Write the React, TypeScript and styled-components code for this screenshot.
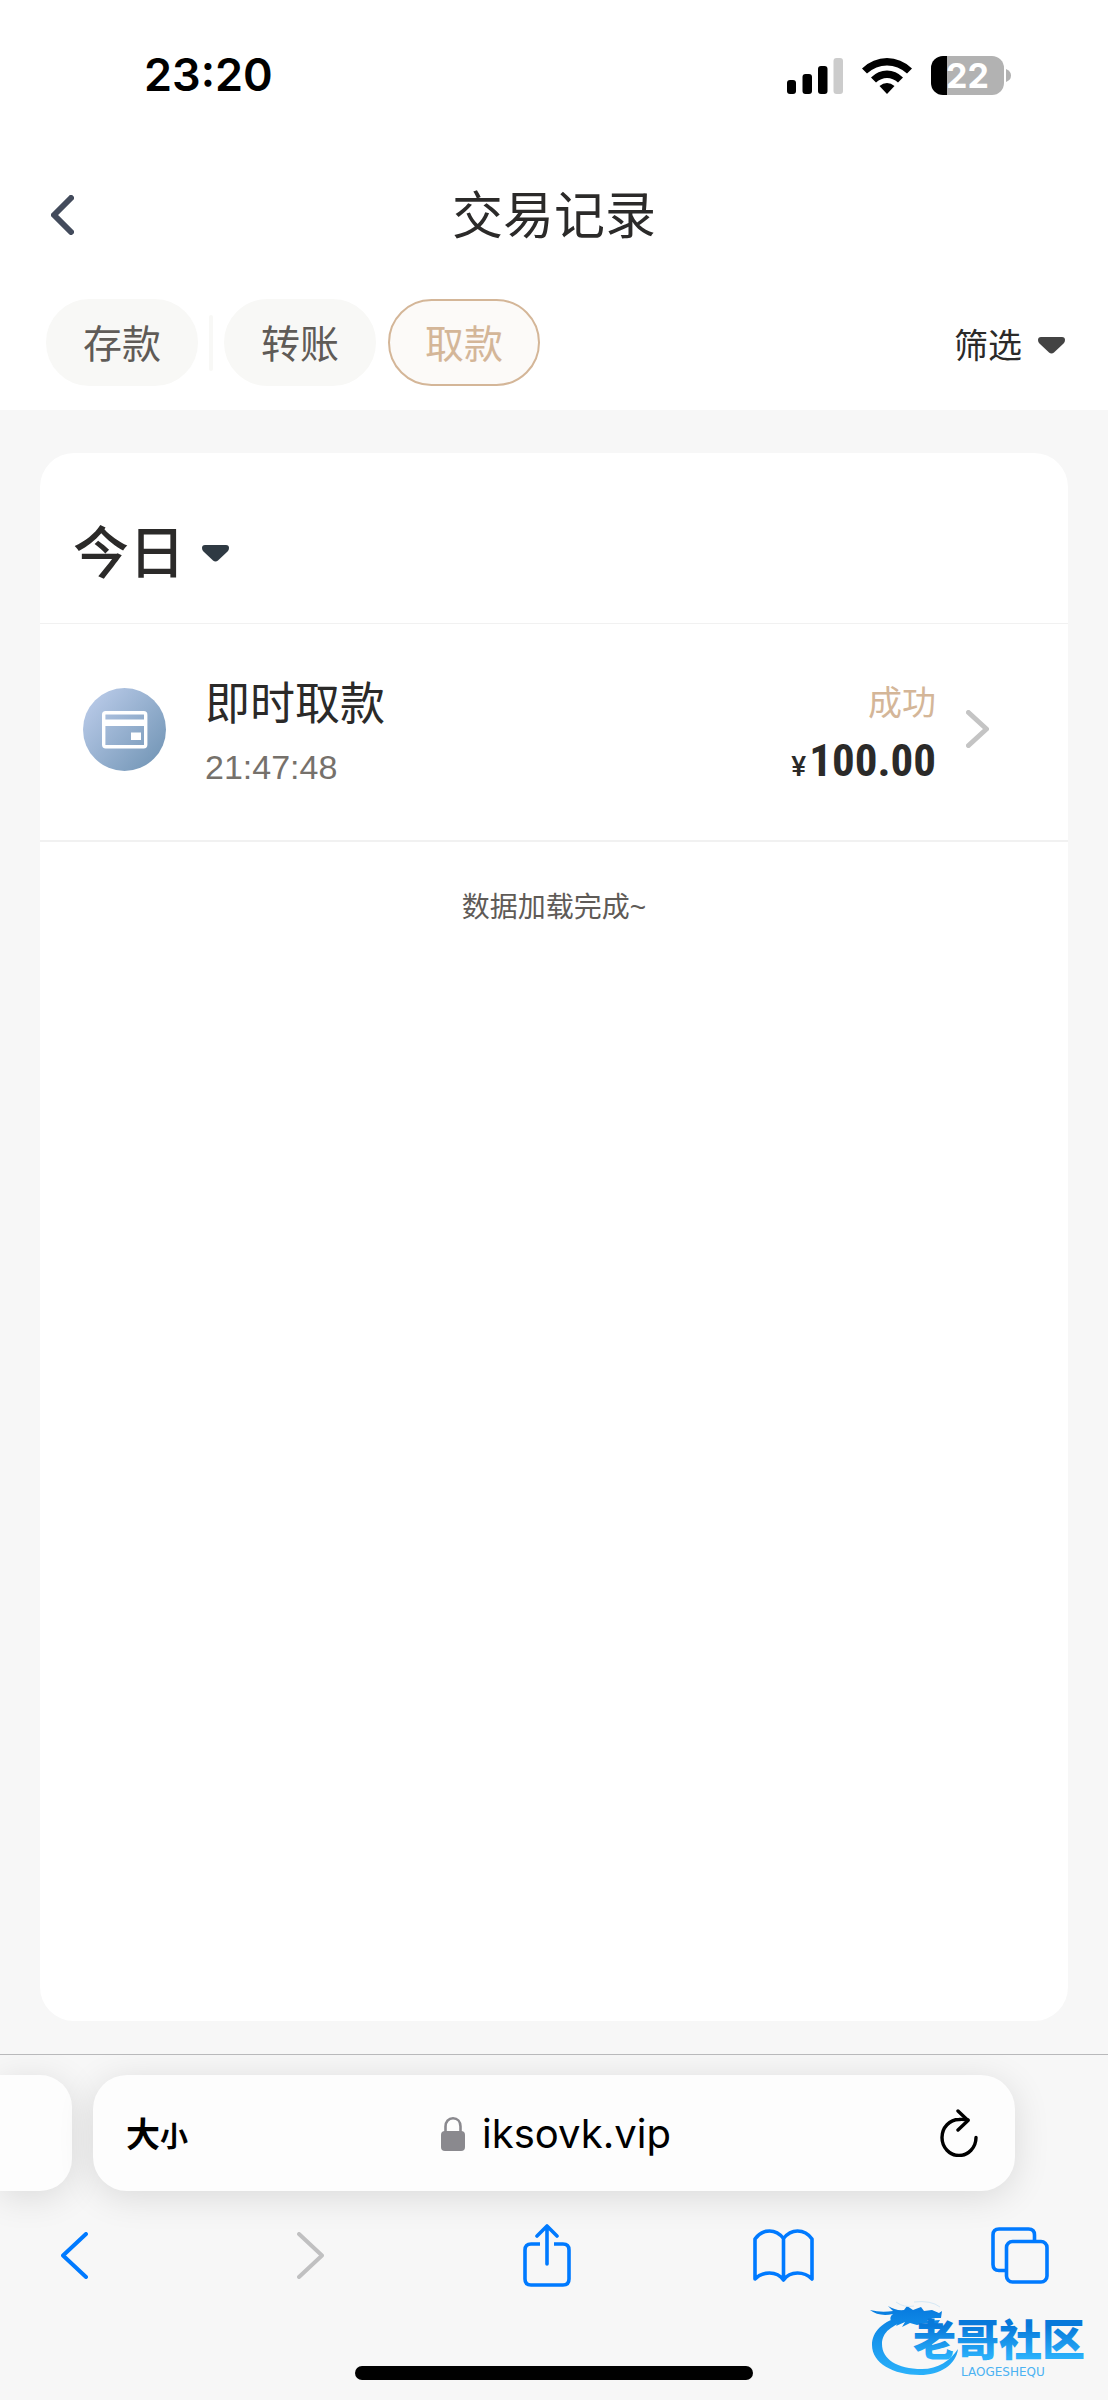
import React from "react";
import styled, { createGlobalStyle } from "styled-components";

const latin = '"Liberation Sans", "Noto Sans CJK SC", sans-serif';
const system = 'Inter, "Noto Sans CJK SC", sans-serif';

const colors = {
  ink: "#2b2a29",
  muted: "#5f5b57",
  faint: "#76716b",
  tan: "#d4b698",
  page: "#f7f7f7",
  line: "#f1f1f1",
  blue: "#007aff",
};

const GlobalStyle = createGlobalStyle`
  * { box-sizing: border-box; }
  body { margin: 0; background: ${colors.page}; font-family: ${latin}; color: ${colors.ink}; }
  button { margin: 0; padding: 0; border: 0; background: none; font: inherit; color: inherit; cursor: pointer; }
  svg { display: block; flex: none; }
  h1, h2, h3, p { margin: 0; font-weight: 400; }
`;

const Screen = styled.div`
  min-height: 100vh;
  display: flex;
  flex-direction: column;
`;

const StatusBar = styled.div`
  height: 150px;
  padding: 0 97px 0 144px;
  display: flex;
  align-items: center;
  justify-content: space-between;
  background: #fff;
`;

const Clock = styled.time`
  font: 600 45px/56px ${system};
  color: #000;
`;

const StatusIcons = styled.div`
  display: flex;
  align-items: center;
  gap: 19px;
`;

const BatteryGroup = styled.div`
  display: flex;
  align-items: center;
  gap: 2px;
`;

const Battery = styled.div`
  width: 73px;
  height: 39px;
  border-radius: 12px;
  background: linear-gradient(90deg, #000 22%, #b2b2b2 22%);
  color: #fff;
  font: 700 34px/39px ${system};
  text-align: center;
`;

const TitleBar = styled.header`
  height: 130px;
  padding: 0 51px;
  display: grid;
  grid-template-columns: 60px 1fr 60px;
  align-items: center;
  background: #fff;
`;

const Title = styled.h1`
  padding-top: 4px;
  font-size: 51px;
  line-height: 60px;
  text-align: center;
`;

const FilterBar = styled.nav`
  padding: 19px 43px 24px 46px;
  display: flex;
  align-items: center;
  background: #fff;
`;

const Pill = styled.button<{ $active?: boolean }>`
  width: 152px;
  height: 87px;
  padding-top: 4px;
  border-radius: 44px;
  border: 2px solid ${(p) => (p.$active ? colors.tan : "#f8f8f6")};
  background: ${(p) => (p.$active ? "#fcfaf8" : "#f8f8f6")};
  color: ${(p) => (p.$active ? colors.tan : colors.muted)};
  font-size: 39px;
  line-height: 48px;
  & + & { margin-left: 12px; }
`;

const Separator = styled.span`
  width: 4px;
  height: 56px;
  margin: 0 11px;
  border-radius: 2px;
  background: #f8f8f6;
`;

const FilterButton = styled.button`
  margin-left: auto;
  padding-top: 6px;
  display: flex;
  align-items: center;
  gap: 16px;
  font-size: 34px;
  line-height: 40px;
`;

const Main = styled.main`
  flex: 1;
  padding: 43px 40px 33px;
  display: flex;
`;

const Card = styled.section`
  flex: 1;
  border-radius: 34px;
  background: #fff;
`;

const DayHeading = styled.h2`
  height: 171px;
  padding: 31px 33px 0;
  display: flex;
  align-items: center;
  border-bottom: 1px solid ${colors.line};
`;

const DayButton = styled.button`
  display: flex;
  align-items: center;
  gap: 17px;
  font-size: 56px;
  font-weight: 500;
  line-height: 68px;
`;

const Record = styled.a`
  height: 218px;
  padding: 0 79px 6px 43px;
  display: flex;
  align-items: center;
  border-bottom: 2px solid ${colors.line};
  color: inherit;
  text-decoration: none;
`;

const RecordText = styled.div`
  flex: 1;
  margin-left: 39px;
  padding-top: 8px;
`;

const RecordName = styled.h3`
  font-size: 45px;
  line-height: 68px;
`;

const RecordTime = styled.time`
  display: block;
  font-size: 34px;
  line-height: 56px;
  color: ${colors.faint};
`;

const RecordResult = styled.div`
  margin-right: 30px;
  padding-top: 14px;
  text-align: right;
`;

const Status = styled.p`
  font-size: 34px;
  line-height: 56px;
  color: ${colors.tan};
`;

const Amount = styled.p`
  font-family: "Roboto Condensed", Roboto, sans-serif;
  font-weight: 700;
  font-size: 45px;
  line-height: 60px;
`;

const Currency = styled.span`
  margin-right: 3px;
  font-family: Roboto, sans-serif;
  font-size: 28px;
  font-weight: 500;
`;

const EndNote = styled.p`
  padding-top: 46px;
  font-size: 28px;
  line-height: 40px;
  text-align: center;
  color: ${colors.muted};
`;

const BrowserChrome = styled.footer`
  border-top: 1px solid #b9b9bb;
  background: #f7f7f7;
  overflow: hidden;
`;

const TabStrip = styled.div`
  padding: 20px 93px 0 0;
  display: grid;
  grid-template-columns: 72px 1fr;
  gap: 21px;
`;

const PreviousTab = styled.div`
  border-radius: 0 32px 32px 0;
  background: #fdfdfd;
  box-shadow: 0 6px 36px rgba(0, 0, 0, 0.12);
`;

const AddressBar = styled.div`
  height: 116px;
  padding: 0 37px 0 33px;
  display: grid;
  grid-template-columns: 68px 1fr 60px;
  align-items: center;
  border-radius: 34px;
  background: #fdfdfd;
  color: #000;
  box-shadow: 0 6px 36px rgba(0, 0, 0, 0.12);
`;

const TextSize = styled.button`
  padding-top: 6px;
  font-size: 34px;
  font-weight: 700;
  line-height: 48px;
  text-align: left;
  white-space: nowrap;
  small { font-size: 28px; }
`;

const Address = styled.button`
  padding-top: 2px;
  display: flex;
  align-items: center;
  justify-content: center;
  gap: 17px;
  font: 400 40px/60px ${system};
`;

const Reload = styled.button`
  justify-self: end;
`;

const Tools = styled.div`
  height: 128px;
  padding: 0 54px 0 40px;
  display: flex;
  justify-content: space-between;
`;

const Tool = styled.button`
  width: 68px;
  display: flex;
  align-items: center;
  justify-content: center;
`;

const BottomEdge = styled.div`
  position: relative;
  height: 81px;
  display: flex;
  justify-content: center;
  align-items: flex-end;
  padding-bottom: 20px;
`;

const HomeIndicator = styled.div`
  width: 36%;
  height: 14px;
  border-radius: 7px;
  background: #000;
`;

const Watermark = styled.div`
  position: absolute;
  right: 16px;
  bottom: 22px;
`;

const Triangle = ({ color }: { color: string }) => (
  <svg width="27" height="17" viewBox="0 0 27 17" aria-hidden="true">
    <path d="M3 0H24Q27 0 27 3Q27 5 25.500 6.500L16 15.500Q13.500 17.500 11 15.500L1.500 6.500Q0 5 0 3Q0 0 3 0Z" fill={color} />
  </svg>
);

const Chevron = ({ w, h, color, stroke, right }: { w: number; h: number; color: string; stroke: number; right?: boolean }) => {
  const m = stroke / 2;
  const tip = right ? w - m : m;
  const tail = right ? m : w - m;
  return (
    <svg width={w} height={h} viewBox={`0 0 ${w} ${h}`} fill="none" stroke={color} strokeWidth={stroke} strokeLinecap="round" strokeLinejoin="round" aria-hidden="true">
      <path d={`M${tail} ${m}L${tip} ${h / 2}L${tail} ${h - m}`} />
    </svg>
  );
};

const Signal = () => (
  <svg width="56" height="37" viewBox="0 0 56 37" aria-label="信号">
    <rect x="0" y="23" width="9" height="14" rx="3" />
    <rect x="15.500" y="17" width="9.500" height="20" rx="3" />
    <rect x="31" y="9" width="9.500" height="28" rx="3" />
    <rect x="46.500" y="1" width="9.500" height="36" rx="3" fill="#ccc" />
  </svg>
);

const Wifi = () => (
  <svg width="50" height="37" viewBox="0 0 50 37" aria-label="Wi-Fi">
    <path d="M0 11.500Q11 1 25 1T50 11.500L45 16.500Q36 8.500 25 8.500T5 16.500Z" />
    <path d="M9 20.500Q16 13.500 25 13.500T41 20.500L36 25.500Q31 21 25 21T14 25.500Z" />
    <path d="M17.500 29Q21 26 25 26T32.500 29L25 37Z" />
  </svg>
);

const CardBadge = () => (
  <svg width="83" height="83" viewBox="0 0 83 83" aria-hidden="true">
    <defs>
      <linearGradient id="badge" x1="0.100" y1="0.150" x2="0.900" y2="0.850">
        <stop offset="0" stopColor="#b6c8e6" />
        <stop offset="1" stopColor="#7799b9" />
      </linearGradient>
    </defs>
    <circle cx="41.500" cy="41.500" r="41.500" fill="url(#badge)" />
    <rect x="20.700" y="24.700" width="42" height="34" rx="2" fill="none" stroke="#fff" strokeWidth="3.400" />
    <path d="M21 31.500H62V38H21ZM48 44.500H58V52H48Z" fill="#fff" />
  </svg>
);

const Lock = () => (
  <svg width="24" height="34" viewBox="0 0 24 34" aria-hidden="true">
    <path d="M4.500 16V9.500C4.500 4.500 7.500 1.300 12 1.300S19.500 4.500 19.500 9.500V16" fill="none" stroke="#8a898e" strokeWidth="2.600" />
    <rect y="14" width="24" height="20" rx="4" fill="#8a898e" />
  </svg>
);

const ReloadIcon = () => (
  <svg width="38" height="48" viewBox="0 0 38 48" fill="none" stroke="#000" strokeWidth="3.400" strokeLinecap="round" strokeLinejoin="round" aria-hidden="true">
    <path d="M36 28.500A17 18 0 1 1 19 10.500Q23 10 28 11" />
    <path d="M18 2L28 11.500L18 21" />
  </svg>
);

const toolStroke = { fill: "none", stroke: colors.blue, strokeWidth: 3.6, strokeLinecap: "round", strokeLinejoin: "round" } as const;

const ShareIcon = () => (
  <svg width="48" height="63" viewBox="0 0 48 63" {...toolStroke} aria-hidden="true">
    <path d="M17 20H8Q2 20 2 26V55Q2 61 8 61H40Q46 61 46 55V26Q46 20 40 20H31" strokeLinecap="butt" />
    <path d="M24 40V3M14 12L24 2L34 12" />
  </svg>
);

const BookIcon = () => (
  <svg width="61" height="53" viewBox="0 0 61 53" {...toolStroke} aria-hidden="true">
    <path d="M30.500 9.500C27 5 22.500 2 16.500 2S5.500 5 2 10V50C6 46 10.500 44 16.500 44S27 46 30.500 51C34 46 38.500 44 44.500 44S55 46 59 50V10C55.500 5 50.500 2 44.500 2S34 5 30.500 9.500ZM30.500 9.500V51" />
  </svg>
);

const TabsIcon = () => (
  <svg width="58" height="57" viewBox="0 0 58 57" {...toolStroke} aria-hidden="true">
    <path d="M14 43.500H8Q2 43.500 2 37.500V8Q2 2 8 2H37.500Q43.500 2 43.500 8V13" strokeLinecap="butt" />
    <rect x="15.500" y="14.500" width="40.500" height="40.500" rx="6" />
  </svg>
);

const CommunityLogo = () => (
  <svg width="222" height="78" viewBox="0 0 222 78" role="img" aria-label="老哥社区 LAOGESHEQU">
    <defs>
      <linearGradient id="logo" gradientUnits="userSpaceOnUse" x1="0" y1="10" x2="0" y2="76">
        <stop offset="0" stopColor="#087de0" />
        <stop offset="1" stopColor="#2bb2fb" />
      </linearGradient>
      <linearGradient id="logoText" gradientUnits="userSpaceOnUse" x1="0" y1="26" x2="0" y2="58">
        <stop offset="0" stopColor="#0879da" />
        <stop offset="1" stopColor="#2ab1fb" />
      </linearGradient>
    </defs>
    <path d="M33 16C12 21 2 32 2 45C2 63 23 75 50 75C70 75 86 65 88 49C80 61 68 69 52 69C27 69 12 59 12 44C12 32 22 25 39 20Z" fill="url(#logo)" />
    <path d="M0 10Q11 13 23 11L18 6Q26 11 34 10L37 6L43 10L51 7L54 11L62 10L69 13L72 11L71 18L63 18L57 21L70 20L67 25L56 23L47 25L40 23L32 27L35 22L26 26L30 20L21 21Q19 17 23 14Q9 17 0 10Z" fill="url(#logo)" />
    <path d="M26 2Q34 8 44 6M44 2Q61 0 70 7" fill="none" stroke="#d5e8f5" strokeWidth="1" />
    <text x="43" y="56" fontFamily={'"Liberation Sans", "Noto Sans CJK SC", sans-serif'} fontWeight="900" fontSize="43" fill="url(#logoText)">老哥社区</text>
    <text x="91" y="76" fontFamily={'"DejaVu Sans", sans-serif'} fontSize="12" fill="#4bb2f2">LAOGESHEQU</text>
  </svg>
);

export default function App() {
  return (
    <Screen>
      <GlobalStyle />
      <StatusBar>
        <Clock>23:20</Clock>
        <StatusIcons>
          <Signal />
          <Wifi />
          <BatteryGroup>
            <Battery>22</Battery>
            <svg width="5" height="13" viewBox="0 0 5 13" aria-hidden="true">
              <path d="M0 0Q5 2 5 6.500T0 13Z" fill="#b2b2b2" />
            </svg>
          </BatteryGroup>
        </StatusIcons>
      </StatusBar>

      <TitleBar>
        <button type="button" aria-label="返回">
          <Chevron w={23} h={40} stroke={6} color="#434b5c" />
        </button>
        <Title>交易记录</Title>
      </TitleBar>

      <FilterBar>
        <Pill type="button">存款</Pill>
        <Separator />
        <Pill type="button">转账</Pill>
        <Pill type="button" $active aria-pressed="true">取款</Pill>
        <FilterButton type="button">
          筛选
          <Triangle color="#434343" />
        </FilterButton>
      </FilterBar>

      <Main>
        <Card>
          <DayHeading>
            <DayButton type="button">
              今日
              <Triangle color="#2f3a43" />
            </DayButton>
          </DayHeading>
          <Record href="#record">
            <CardBadge />
            <RecordText>
              <RecordName>即时取款</RecordName>
              <RecordTime>21:47:48</RecordTime>
            </RecordText>
            <RecordResult>
              <Status>成功</Status>
              <Amount><Currency>¥</Currency>100.00</Amount>
            </RecordResult>
            <Chevron w={23} h={38} stroke={5} color="#c4c4c4" right />
          </Record>
          <EndNote>数据加载完成~</EndNote>
        </Card>
      </Main>

      <BrowserChrome>
        <TabStrip>
          <PreviousTab />
          <AddressBar>
            <TextSize type="button">大<small>小</small></TextSize>
            <Address type="button">
              <Lock />
              iksovk.vip
            </Address>
            <Reload type="button" aria-label="重新载入">
              <ReloadIcon />
            </Reload>
          </AddressBar>
        </TabStrip>
        <Tools>
          <Tool type="button" aria-label="后退"><Chevron w={27} h={47} stroke={4} color={colors.blue} /></Tool>
          <Tool type="button" aria-label="前进"><Chevron w={27} h={47} stroke={4} color="#c0c0c1" right /></Tool>
          <Tool type="button" aria-label="分享"><ShareIcon /></Tool>
          <Tool type="button" aria-label="书签"><BookIcon /></Tool>
          <Tool type="button" aria-label="标签页"><TabsIcon /></Tool>
        </Tools>
        <BottomEdge>
          <HomeIndicator />
          <Watermark>
            <CommunityLogo />
          </Watermark>
        </BottomEdge>
      </BrowserChrome>
    </Screen>
  );
}
